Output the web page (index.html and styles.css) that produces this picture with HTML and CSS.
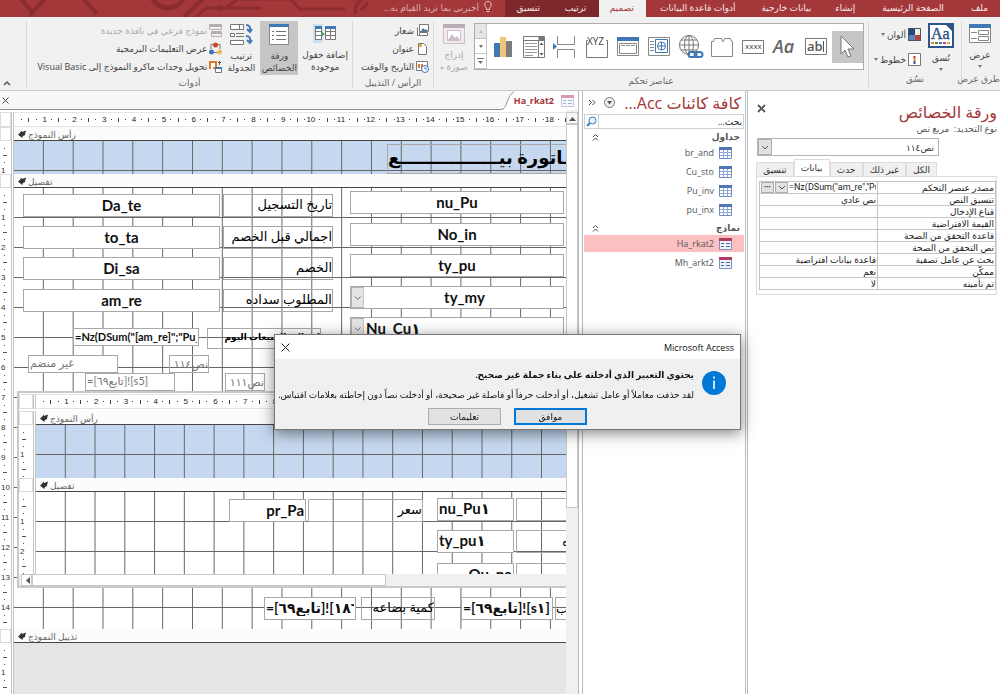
FILE: index.html
```html
<!DOCTYPE html>
<html lang="ar" dir="rtl">
<head>
  <meta charset="UTF-8" />
  <title>Microsoft Access</title>
  <link rel="stylesheet" href="styles.css">
</head>
<body>

  <!-- Title bar tabs -->
  <nav class="tabbar">
    <svg class="circuit" viewBox="0 0 370 17" aria-hidden="true">
      <g fill="none" stroke="#8b2c2f" stroke-width="4">
        <path d="M20 -2L34 14M46 -2L30 15M83 -2L97 14M184 17L204 -2"/>
        <path d="M151 -6A17 17 0 0 0 184 -4" stroke-width="5"/>
        <path d="M196 17L206 8H262M238 -1H290L300 9H345M225 8L238 -1" stroke-width="3"/>
        <path d="M372 -2A13 13 0 0 0 356 14" stroke-width="3"/>
      </g>
      <circle cx="221" cy="8" r="3" fill="#8b2c2f"/>
      <path d="M361 10L368 3" stroke="#8b2c2f" stroke-width="3"/>
    </svg>
    <a class="tab" href="#">ملف</a>
    <a class="tab tab-home" href="#">الصفحة الرئيسية</a>
    <a class="tab" href="#">إنشاء</a>
    <a class="tab" href="#">بيانات خارجية</a>
    <a class="tab tab-db" href="#">أدوات قاعدة البيانات</a>
    <a class="tab tab-ctx active" href="#">تصميم</a>
    <a class="tab tab-ctx" href="#">ترتيب</a>
    <a class="tab tab-ctx" href="#">تنسيق</a>
    <a class="tell-me" href="#">
      <svg width="10" height="13" viewBox="0 0 10 13" fill="none" stroke="#e6c3c4"><path d="M3.500 9.500V8C1 6 1 1.500 5 1.500S9 6 6.500 8v1.500zM3.500 11.500h3"/></svg>
      أخبرني بما تريد القيام به...
    </a>
  </nav>

  <!-- Ribbon -->
  <header class="ribbon">
    <section class="group group-views">
      <div class="group-body">
        <button class="big">
          <svg width="24" height="22" viewBox="0 0 24 22"><path fill="#fff" stroke="#888" d="M1.500 1.500h21v18h-21z"/><path fill="#3f78b4" d="M1 1h22v4H1z"/><path stroke="#888" fill="none" d="M3 9.500h6M3 15.500h6M10.500 7.500h10v4h-10zM10.500 13.500h10v4h-10z"/></svg>
          <span>عرض</span><i class="caret"></i>
        </button>
      </div>
      <h2>طرق عرض</h2>
    </section>

    <section class="group group-theme">
      <div class="group-body">
        <button class="big">
          <svg width="26" height="25" viewBox="0 0 26 25"><path fill="#fff" stroke="#2f5487" stroke-width="2" d="M1 1h24v23H1z"/><path fill="#2f5487" d="M17 1h8v8z"/><text x="3" y="16" font-family="Liberation Serif" font-size="16" fill="#2f5487" stroke="#2f5487" stroke-width=".4" direction="ltr">Aa</text><path stroke-width="2" d="M3 20h3" stroke="#e0873a"/><path stroke-width="2" d="M7 20h3" stroke="#4c8a3c"/><path stroke-width="2" d="M11 20h3" stroke="#3f78b4"/><path stroke-width="2" d="M15 20h3" stroke="#b94f8c"/><path stroke-width="2" d="M19 20h3" stroke="#d9a441"/></svg>
          <span>نُسق</span><i class="caret"></i>
        </button>
        <div class="stack stack-wide">
          <button class="small">
            <svg width="13" height="13" viewBox="0 0 13 13"><path fill="#24477c" d="M0 0h7v7H0z"/><path fill="#f0eee0" d="M7 0h6v7H7z"/><path fill="#5684bd" d="M0 7h7v6H0z"/><path fill="#b5423c" d="M7 7h6v6H7z"/><path fill="none" stroke="#44546a" d="M.5.5h12v12H.5z"/></svg>
            ألوان <i class="caret"></i>
          </button>
          <button class="small">
            <svg width="13" height="13" viewBox="0 0 13 13"><path fill="#fff" stroke="#777" d="M.5.5h12v12H.5z"/><path stroke="#c0392b" stroke-width="2" d="M6.500 3v2"/><path stroke="#e0873a" stroke-width="2" d="M6.500 5v3"/><path stroke="#2f5487" stroke-width="2" d="M6.500 8v3"/></svg>
            خطوط <i class="caret"></i>
          </button>
        </div>
      </div>
      <h2>نسُق</h2>
    </section>

    <section class="group group-controls">
      <div class="group-body">
        <div class="gallery">
          <button class="tool selected" aria-label="تحديد"><svg width="18" height="26" viewBox="0 0 18 26"><path fill="#fff" stroke="#777" d="M3 2v18l4-4 3 7 3-1-3-7h6z"/></svg></button>
          <button class="tool" aria-label="مربع نص"><svg width="24" height="20" viewBox="0 0 24 20"><path fill="#fff" stroke="#777" d="M1.500 1.500h21v16h-21z"/><text x="3" y="14" font-family="Open Sans" font-weight="600" font-size="13" fill="#555" direction="ltr">ab</text><path stroke="#555" d="M19.500 4v11"/></svg></button>
          <button class="tool" aria-label="تسمية"><svg width="28" height="20" viewBox="0 0 28 20"><text x="2" y="16" font-family="Open Sans" font-style="italic" font-weight="600" font-size="18" fill="#666" direction="ltr">Aa</text></svg></button>
          <button class="tool" aria-label="زر"><svg width="24" height="20" viewBox="0 0 24 20"><path fill="#fff" stroke="#777" d="M1.500 3.500h21v13h-21z"/><text x="4" y="12" font-family="Open Sans" font-size="8" fill="#444" direction="ltr">xxxx</text></svg></button>
          <button class="tool" aria-label="علامة تبويب"><svg width="24" height="22" viewBox="0 0 24 22"><path fill="#fff" stroke="#888" d="M1.500 20.500v-15h2l1-3h7l1 3h1l1-3h6l1 3h1v15z"/></svg></button>
          <button class="tool" aria-label="ارتباط"><svg width="26" height="26" viewBox="0 0 26 26" fill="none" stroke="#777"><circle cx="11" cy="11" r="9.500"/><ellipse cx="11" cy="11" rx="4.500" ry="9.500"/><path d="M1.500 11h19M11 1.500v19M3 6h16M3 16h16"/><path stroke="#f8f8f8" stroke-width="6" d="M12 20h12"/><rect x="10.500" y="18" width="8" height="5" rx="2.500" stroke="#3f78b4" stroke-width="2"/><rect x="16.500" y="18" width="8" height="5" rx="2.500" stroke="#3f78b4" stroke-width="2"/></svg></button>
          <button class="tool" aria-label="مستعرض ويب"><svg width="24" height="22" viewBox="0 0 24 22" fill="none" stroke="#888"><path d="M1.500 1.500h21v18h-21zM3 5.500h4M3 8.500h4M3 11.500h4M3 14.500h4"/><path fill="#fff" stroke="#3f78b4" d="M8.500 3.500h12v13h-12z"/><circle cx="14.500" cy="10" r="4" stroke="#3f78b4"/><path stroke="#3f78b4" d="M10.500 10h8M14.500 6v8"/></svg></button>
          <button class="tool" aria-label="عنصر تنقل"><svg width="24" height="22" viewBox="0 0 24 22" fill="none" stroke="#888"><path fill="#fff" d="M1.500 1.500h21v18h-21z"/><path fill="#3f78b4" stroke="none" d="M1 1h22v4H1z"/><path d="M3.500 7.500h17v10h-17zM5 9.500h4M10 9.500h4M15 9.500h4"/></svg></button>
          <button class="tool" aria-label="مجموعة خيارات"><svg width="24" height="24" viewBox="0 0 24 24"><path fill="none" stroke="#777" d="M3 5.500H1.500v17h21v-17H21"/><text x="2" y="10" font-family="Open Sans" font-size="10" fill="#444" direction="ltr">XYZ</text></svg></button>
          <button class="tool" aria-label="فاصل صفحات"><svg width="24" height="24" viewBox="0 0 24 24" fill="none" stroke="#888"><path d="M4.500 1v8.500h17V1M4.500 23v-8.500h17V23"/><path fill="#3f78b4" stroke="none" d="M0 8v7l4-3.500z"/></svg></button>
          <button class="tool" aria-label="مربع تحرير وسرد"><svg width="24" height="24" viewBox="0 0 24 24" fill="none" stroke="#777"><path fill="#fff" d="M1.500 1.500h21v21h-21zM1.500 5.500h21M16.500 5.500v17"/><path fill="#777" d="M17 2h5v3h-5z"/><path stroke="#999" d="M3 8.500h12M3 11.500h12M3 14.500h12M3 17.500h12M3 20.500h8"/><path fill="#555" stroke="none" d="M17.500 10h4l-2-2.500zM17.500 18h4l-2 2.500z"/></svg></button>
          <button class="tool" aria-label="مخطط"><svg width="20" height="24" viewBox="0 0 20 24"><path fill="#3f78b4" d="M1 8h6v14H1z"/><path fill="#edc576" d="M7 2h6v20H7z"/><path fill="#7b7b7b" d="M13 6h6v16h-6z"/></svg></button>
          <div class="gallery-scroll">
            <button class="off" aria-label="أعلى"><i class="caret up"></i></button>
            <button aria-label="أسفل"><i class="caret"></i></button>
            <button aria-label="المزيد"><svg width="7" height="7" viewBox="0 0 7 7"><path fill="#777" d="M0 0h7v1H0zM1 3h5L3.500 6z"/></svg></button>
          </div>
        </div>
        <button class="big disabled" disabled>
          <svg width="24" height="22" viewBox="0 0 24 22"><path fill="#f2eaf0" stroke="#c9bfc6" d="M1.500 1.500h21v19h-21z"/><path fill="#b9adb6" d="M1 1h22v4H1z"/><path fill="#fff" stroke="#cdbfca" d="M5.500 7.500h13v10h-13z"/><path fill="#cdbfca" d="M6 17l4-6 3 4 2-2 3 4z"/></svg>
          <span>إدراج<br>صورة <i class="caret"></i></span>
        </button>
      </div>
      <h2>عناصر تحكم</h2>
    </section>

    <section class="group group-head">
      <div class="group-body">
        <div class="stack">
          <button class="small"><svg width="13" height="13" viewBox="0 0 13 13" fill="#fff" stroke="#777"><path d="M3.500.5h9v7h-9zM1.500 3.500v8h7"/><path fill="#3f78b4" stroke="none" d="M5 7l2-3 2 2 1-1 2 2z"/><path d="M3.500 8.500h8v3h-8z"/></svg>شعار</button>
          <button class="small"><svg width="13" height="13" viewBox="0 0 13 13"><path fill="#fff" stroke="#777" d="M2.500 1.500h5l3 3v8h-8z"/><path fill="#e9a64a" d="M3 2h3v3H3z"/></svg>عنوان</button>
          <button class="small"><svg width="13" height="13" viewBox="0 0 13 13"><path fill="#fff" stroke="#777" d="M.5 1.500h11v9H.5z"/><path stroke="#d3762f" stroke-width="2" fill="none" d="M3 4v4M6 4v4"/><circle cx="9" cy="9" r="3.500" fill="#fff" stroke="#3f78b4"/><path stroke="#3f78b4" fill="none" d="M9 7v2h2"/></svg>التاريخ والوقت</button>
        </div>
      </div>
      <h2>الرأس / التذييل</h2>
    </section>

    <section class="group group-tools">
      <div class="group-body">
        <button class="big">
          <svg width="24" height="22" viewBox="0 0 24 22"><path fill="#cfe0f3" d="M0 1h10v19H0z"/><path fill="#fff" stroke="#777" d="M2.500 3.500h6v13h-6zM2.500 8.500h6M2.500 12.500h6M12.500 3.500h10v13h-10zM12.500 8.500h10M12.500 12.500h10M17.500 5v11"/><path fill="#3f78b4" d="M2 3h7v3H2zM12 3h11v3H12z"/><path fill="#4f9a6a" d="M8 8v6l4-3z"/></svg>
          <span>إضافة حقول<br>موجودة</span>
        </button>
        <button class="big selected">
          <svg width="22" height="23" viewBox="0 0 22 23"><path fill="#fff" stroke="#888" d="M1.500 1.500h19v20h-19z"/><path fill="#3f78b4" d="M1 1h20v3H1z"/><path stroke="#777" d="M4 8.500h2M4 12.500h2M4 16.500h2M8 8.500h10M8 12.500h10M8 16.500h10"/></svg>
          <span>ورقة<br>الخصائص</span>
        </button>
        <button class="big narrow">
          <svg width="24" height="23" viewBox="0 0 24 23" fill="none" stroke="#777"><path fill="#fff" d="M1.500 1.500h13v5h-13zM1.500 10.500h4v3h-4zM1.500 17.500h13v4h-13z"/><path d="M10.500 2v4M7 10.500h8M7 13.500h8"/><path stroke="#3f78b4" stroke-width="2" d="M17 2q5 0 4 6M18 6l3 3 2-3M17 13q5 0 4 5M18 17l3 3 2-3"/></svg>
          <span>ترتيب<br>الجدولة</span>
        </button>
        <div class="stack">
          <button class="small disabled" disabled><svg width="13" height="13" viewBox="0 0 13 13"><path fill="#f4eef2" stroke="#b5adb2" d="M.5.5h12v5H.5zM2.500 7.500h10v5h-10z"/><path stroke="#b5adb2" stroke-width="2" d="M0 2h13M2 9h11"/></svg>نموذج فرعي في نافذة جديدة</button>
          <button class="small"><svg width="13" height="13" viewBox="0 0 13 13"><path fill="none" stroke="#777" d="M2 7V2.500h9V7M4 10.500h5"/><circle cx="6.500" cy="3" r="2.500" fill="#d24726"/><circle cx="2.500" cy="10" r="2.500" fill="#3f78b4"/><circle cx="10.500" cy="10" r="2.500" fill="#edb765"/></svg>عرض التعليمات البرمجية</button>
          <button class="small"><svg width="13" height="13" viewBox="0 0 13 13"><path fill="#fff" stroke="#dc7a26" stroke-width="2" d="M1 9V2h6v6H4"/><path fill="none" stroke="#555" d="M9 2.500h3M10.500 1v4"/><path fill="#fff" stroke="#777" d="M6.500 7.500h6v5h-6z"/><path fill="#3f78b4" d="M6 7h7v2H6z"/></svg>تحويل وحدات ماكرو النموذج إلى Visual Basic</button>
        </div>
      </div>
      <h2>أدوات</h2>
    </section>
    <button class="collapse" aria-label="طي الشريط"><svg width="8" height="6" viewBox="0 0 8 6"><path fill="none" stroke="#555" stroke-width="1.500" d="M1 5l3-3 3 3"/></svg></button>
  </header>

  <main class="workspace">

    <!-- Property sheet -->
    <aside class="props">
      <div class="props-head">
        <h1>ورقة الخصائص</h1>
        <button class="close" aria-label="إغلاق"><svg width="9" height="9" viewBox="0 0 9 9"><path stroke="#555" stroke-width="1.800" d="M1 1l7 7M8 1L1 8"/></svg></button>
      </div>
      <p class="props-type">نوع التحديد:&nbsp; مربع نص</p>
      <div class="combo props-combo">
        <select aria-label="التحديد"><option>نص١١٤</option></select>
        <svg viewBox="0 0 14 16"><path fill="#e1e1e1" stroke="#adadad" d="M.5.5h13v15H.5z"/><path fill="none" stroke="#555" d="M4 7l3 3 3-3"/></svg>
      </div>
      <div class="props-tabs">
        <button>الكل</button>
        <button>غير ذلك</button>
        <button>حدث</button>
        <button class="active">بيانات</button>
        <button>تنسيق</button>
      </div>
      <div class="props-panel">
        <table>
          <tr>
            <th>مصدر عنصر التحكم</th>
            <td class="source">
              <div>
                <input type="text" dir="ltr" aria-label="مصدر عنصر التحكم" value='=Nz(DSum("am_re","Pu_inv"'>
                <button aria-label="قائمة"><svg width="8" height="6" viewBox="0 0 8 6"><path fill="none" stroke="#555" d="M1 1l3 3 3-3"/></svg></button>
                <button aria-label="منشئ التعبير">•••</button>
              </div>
            </td>
          </tr>
          <tr><th>تنسيق النص</th><td>نص عادي</td></tr>
          <tr><th>قناع الإدخال</th><td></td></tr>
          <tr><th>القيمة الافتراضية</th><td></td></tr>
          <tr><th>قاعدة التحقق من الصحة</th><td></td></tr>
          <tr><th>نص التحقق من الصحة</th><td></td></tr>
          <tr><th>بحث عن عامل تصفية</th><td>قاعدة بيانات افتراضية</td></tr>
          <tr><th>ممكّن</th><td>نعم</td></tr>
          <tr><th>تم تأمينه</th><td>لا</td></tr>
        </table>
      </div>
    </aside>

    <!-- Navigation pane -->
    <aside class="objects">
      <div class="objects-head">
        <h1>كافة كائنات Acc...</h1>
        <button aria-label="القائمة"><svg width="11" height="11" viewBox="0 0 11 11"><circle cx="5.500" cy="5.500" r="5" fill="#eee" stroke="#777"/><path fill="#555" d="M3 4h5L5.500 7.500z"/></svg></button>
        <button aria-label="طي الجزء"><svg width="8" height="7" viewBox="0 0 8 7"><path fill="none" stroke="#444" d="M1 1l2.500 2.500L1 6M4.500 1L7 3.500 4.500 6"/></svg></button>
      </div>
      <div class="search">
        <input type="text" placeholder="بحث..." aria-label="بحث">
        <button aria-label="ابدأ البحث"><svg width="11" height="11" viewBox="0 0 11 11"><circle cx="6.500" cy="4.500" r="3.500" fill="#e8f2fb" stroke="#3f78b4"/><path stroke="#3f78b4" stroke-width="2" d="M4 7l-3 3"/></svg></button>
      </div>
      <h3>جداول <svg width="7" height="8" viewBox="0 0 7 8"><path fill="none" stroke="#444" d="M1 4l2.500-2.500L6 4M1 7.500L3.500 5 6 7.500"/></svg></h3>
      <ul>
        <li><a href="#"><svg class="ic"><use href="#ic-table"/></svg>br_and</a></li>
        <li><a href="#"><svg class="ic"><use href="#ic-table"/></svg>Cu_sto</a></li>
        <li><a href="#"><svg class="ic"><use href="#ic-table"/></svg>Pu_inv</a></li>
        <li><a href="#"><svg class="ic"><use href="#ic-table"/></svg>pu_inx</a></li>
      </ul>
      <h3>نماذج <svg width="7" height="8" viewBox="0 0 7 8"><path fill="none" stroke="#444" d="M1 4l2.500-2.500L6 4M1 7.500L3.500 5 6 7.500"/></svg></h3>
      <ul>
        <li class="current"><a href="#"><svg class="ic"><use href="#ic-form"/></svg>Ha_rkat2</a></li>
        <li><a href="#"><svg class="ic"><use href="#ic-form"/></svg>Mh_arkt2</a></li>
      </ul>
    </aside>

    <!-- Form in design view -->
    <section class="doc" dir="ltr">
      <div class="doc-tabs">
        <button class="close" aria-label="إغلاق"><svg width="7" height="7" viewBox="0 0 7 7"><path stroke="#444" d="M.5.5l6 6M6.500.5l-6 6"/></svg></button>
        <svg class="slope" viewBox="0 0 12 19"><path fill="#fff" d="M0 19Q3 18 5 11T12 0V19z"/><path fill="none" stroke="#8f959c" d="M0 18Q3 18 5 11T12 .5"/></svg>
        <a class="doc-tab" href="#">Ha_rkat2 <svg class="ic faded"><use href="#ic-form"/></svg></a>
      </div>

      <div class="doc-body">
        <div class="designer">
          <div class="row ruler-row">
            <div class="vruler corner"></div>
            <div class="hruler main-scale">
              <span>1</span><span>2</span><span>3</span><span>4</span><span>5</span><span>6</span><span>7</span><span>8</span><span>9</span><span>10</span><span>11</span><span>12</span><span>13</span><span>14</span><span>15</span><span>16</span><span>17</span><span>18</span><span></span>
            </div>
          </div>

          <div class="row bar"><div class="vruler box"></div><h4>رأس النموذج</h4></div>
          <div class="row">
            <div class="vruler"><span>1</span></div>
            <div class="grid header-grid main-grid">
              <div class="label form-title" dir="rtl">فـــــــــــــــاتورة بيــــــــــــــــع</div>
            </div>
          </div>

          <div class="row bar"><div class="vruler box"></div><h4>تفصيل</h4></div>
          <div class="row">
            <div class="vruler">
              <span>1</span><span>2</span><span>3</span><span>4</span><span>5</span><span>6</span><span>7</span><span>8</span><span>9</span><span>10</span><span>11</span><span>12</span><span>13</span><span>14</span><span></span>
            </div>
            <div class="grid detail-grid main-grid">
              <input class="field col-a line-1" id="da_te" value="Da_te">
              <input class="field col-a line-2" id="to_ta" value="to_ta">
              <input class="field col-a line-3" id="di_sa" value="Di_sa">
              <input class="field col-a line-4" id="am_re" value="am_re">

              <label class="label col-b line-1" for="da_te" dir="rtl">تاريخ التسجيل</label>
              <label class="label col-b line-2" for="to_ta" dir="rtl">اجمالي قبل الخصم</label>
              <label class="label col-b line-3" for="di_sa" dir="rtl">الخصم</label>
              <label class="label col-b line-4" for="am_re" dir="rtl">المطلوب سداده</label>

              <input class="field col-c line-1" aria-label="nu_Pu" value="nu_Pu">
              <input class="field col-c line-2" aria-label="No_in" value="No_in">
              <input class="field col-c line-3" aria-label="ty_pu" value="ty_pu">
              <div class="field combo col-c line-4">
                <select aria-label="ty_my"><option>ty_my</option></select>
                <svg viewBox="0 0 14 22"><path fill="#e4e4e4" stroke="#adadad" d="M.5.5h13v21H.5z"/><path fill="none" stroke="#666" d="M4 10l3 3 3-3"/></svg>
              </div>
              <div class="field combo col-c line-5">
                <select class="start" aria-label="Nu_Cu"><option>Nu_Cu١</option></select>
                <svg viewBox="0 0 14 22"><path fill="#e4e4e4" stroke="#adadad" d="M.5.5h13v21H.5z"/><path fill="none" stroke="#666" d="M4 10l3 3 3-3"/></svg>
              </div>

              <input class="field sum-field" id="day_sum" value='=Nz(DSum("[am_re]";"Pu_inv"'>
              <label class="label sum-label" for="day_sum" dir="rtl">اجمالى المبيعات اليوم</label>
              <input class="field minor unbound" aria-label="غير منضم" value="غير منضم">
              <div class="label minor text-114">نص١١٤</div>
              <input class="field minor sub-ref" aria-label="s5" value="=[تابع٦٩]![s5]">
              <div class="label minor text-111">نص١١١</div>

              <!-- Subform -->
              <div class="subform">
                <div class="row sub-ruler-row">
                  <div class="vruler corner"></div>
                  <div class="hruler sub-scale">
                    <span>1</span><span>2</span><span>3</span><span>4</span><span>5</span><span>6</span><span>7</span><span>8</span><span>9</span><span>10</span><span>11</span><span>12</span><span>13</span><span>14</span><span>15</span><span>16</span><span>17</span>
                  </div>
                </div>
                <div class="row bar"><div class="vruler box"></div><h4>رأس النموذج</h4></div>
                <div class="row">
                  <div class="vruler"><span>1</span><span></span></div>
                  <div class="grid header-grid sub-grid sub-header"></div>
                </div>
                <div class="row bar"><div class="vruler box"></div><h4>تفصيل</h4></div>
                <div class="row">
                  <div class="vruler"><span>1</span><span>2</span><span></span></div>
                  <div class="grid sub-grid sub-detail">
                    <input class="field sub-price end" id="pr_pa" value="pr_Pa">
                    <label class="label sub-price-label" for="pr_pa" dir="rtl">سعر</label>
                    <input class="field sub-code start sub-line-1" aria-label="nu_Pu1" value="nu_Pu١">
                    <input class="field sub-code start sub-line-2" aria-label="ty_pu1" value="ty_pu١">
                    <input class="field sub-code end sub-line-3" aria-label="Qu_pa" value="Qu_pa">
                    <div class="label sub-cut sub-line-1"></div>
                    <div class="label sub-cut sub-line-2" dir="rtl">ه</div>
                    <div class="label sub-cut sub-line-3"></div>
                  </div>
                </div>
                <div class="hscroll">
                  <button aria-label="يسار"><svg width="5" height="7" viewBox="0 0 5 7"><path fill="#555" d="M5 0v7L1 3.500z"/></svg></button>
                  <div class="hthumb"></div>
                </div>
              </div>

              <input class="field foot-a start" aria-label="18" value="=[تابع٦٩&lrm;]![&lrm;١٨٦]">
              <label class="label foot-b" for="qty" dir="rtl">كمية بضاعه</label>
              <input class="field foot-c start" id="qty" value="=[تابع٦٩]![s١]">
              <div class="label foot-d">ب</div>
            </div>
          </div>

          <div class="row bar"><div class="vruler box"></div><h4>تذييل النموذج</h4></div>
          <div class="row rest">
            <div class="vruler"><span>1</span><span></span></div>
            <div class="outside"></div>
          </div>
        </div>

        <div class="vscroll">
          <button aria-label="أعلى"><svg width="7" height="5" viewBox="0 0 7 5"><path fill="#555" d="M0 5h7L3.500 1z"/></svg></button>
          <div class="vthumb"></div>
        </div>
      </div>
    </section>
  </main>

  <!-- Error message -->
  <div class="dialog" role="alertdialog" aria-labelledby="dialogTitle">
    <div class="dialog-title">
      <span id="dialogTitle">Microsoft Access</span>
      <button class="close" aria-label="إغلاق"><svg width="9" height="9" viewBox="0 0 9 9"><path stroke="#222" d="M.5.5l8 8M8.500.5l-8 8"/></svg></button>
    </div>
    <div class="dialog-body">
      <svg class="info" viewBox="0 0 24 24"><circle cx="12" cy="12" r="12" fill="#0078d7"/><path stroke="#fff" stroke-width="1.600" d="M12 9.500v8.500M12 5.500v2"/></svg>
      <div class="message">
        <p class="strong">يحتوي التعبير الذي أدخلته على بناء جملة غير صحيح.</p>
        <p>لقد حذفت معاملاً أو عامل تشغيل، أو أدخلت حرفاً أو فاصلة غير صحيحة، أو أدخلت نصاً دون إحاطته بعلامات اقتباس.</p>
      </div>
    </div>
    <div class="dialog-buttons">
      <button class="default">موافق</button>
      <button>تعليمات</button>
    </div>
  </div>

  <svg class="defs" aria-hidden="true">
    <symbol id="ic-table" viewBox="0 0 13 12"><path fill="#fff" stroke="#6f8fc0" d="M.5.5h12v11H.5z"/><path fill="#4f77b5" d="M0 0h13v3H0z"/><path fill="none" stroke="#8ea9d2" d="M1 5.500h11M1 8.500h11M4.500 3v8M8.500 3v8"/></symbol>
    <symbol id="ic-form" viewBox="0 0 13 12"><path fill="#eef2fa" stroke="#8093bd" d="M.5.5h12v11H.5z"/><path fill="#b33a62" d="M0 0h13v3H0z"/><path fill="none" stroke="#4f68a5" d="M2 5.500h3M2 8.500h3M7 5.500h4M7 8.500h4"/></symbol>
  </svg>

</body>
</html>
```
FILE: styles.css
```css
* {
  box-sizing: border-box;
}

body {
  margin: 0;
  height: 100vh;
  display: flex;
  flex-direction: column;
  overflow: hidden;
  font-family: "Open Sans", "DejaVu Sans", sans-serif;
  font-size: 9px;
  color: #444;
  background: #fff;
}

h1, h2, h3, h4, p, ul {
  margin: 0;
  padding: 0;
  font-weight: normal;
  list-style: none;
}

button {
  padding: 0;
  border: 0;
  background: none;
  font: inherit;
  color: inherit;
}

input, select {
  min-width: 0;
  margin: 0;
  padding: 0;
  border: 0;
  font: inherit;
  color: inherit;
  background: none;
  border-radius: 0;
  appearance: none;
}

a {
  color: inherit;
  text-decoration: none;
}

svg {
  flex: none;
  display: block;
}

.defs {
  position: absolute;
  width: 0;
  height: 0;
}

.ic {
  width: 13px;
  height: 12px;
}

.faded {
  opacity: 0.5;
}

/* Title bar */
.tabbar {
  position: relative;
  display: flex;
  height: 17px;
  background: #a4373a;
  color: #f6e9e9;
  overflow: hidden;
}

.circuit {
  position: absolute;
  left: 0;
  top: 0;
  width: 370px;
  height: 17px;
}

.tab {
  padding: 0 12px;
  line-height: 15px;
  white-space: nowrap;
}

.tab-home {
  padding: 0 15px;
}

.tab-db {
  padding: 0 14px;
}

.tab-ctx {
  width: 47px;
  text-align: center;
  background: #7f282b;
}

.tab-ctx.active {
  background: #f1f1f1;
  color: #a4373a;
}

.tell-me {
  display: flex;
  gap: 4px;
  padding: 0 12px;
  line-height: 16px;
  color: #dcaeb0;
  white-space: nowrap;
}

/* Ribbon */
.ribbon {
  display: flex;
  height: 74px;
  padding-top: 4px;
  background: #f1f1f1;
  border-bottom: 1px solid #c8c8c8;
  flex: none;
}

.group {
  display: flex;
  flex-direction: column;
  height: 66px;
  border-left: 1px solid #d8d8d8;
}

.group-body {
  display: flex;
  height: 54px;
  gap: 4px;
  padding: 0 4px;
}

.group h2 {
  font-size: 9px;
  line-height: 16px;
  text-align: center;
  white-space: nowrap;
  color: #666;
}

.group-views {
  width: 39px;
}

.group-theme {
  width: 93px;
}

.group-controls {
  flex: 1;
}

.group-head {
  width: 81px;
}

.group-tools {
  width: 326px;
}

.big {
  display: flex;
  flex-direction: column;
  align-items: center;
  gap: 4px;
  min-width: 32px;
  padding-top: 2px;
  line-height: 12px;
  white-space: nowrap;
}

.big.selected {
  width: 38px;
  background: #c6c6c6;
}

.group-tools .big {
  min-width: 38px;
}

.group-tools .narrow {
  min-width: 30px;
}

.disabled {
  color: #aaa;
}

.caret {
  display: inline-block;
  border: 2px solid transparent;
  border-top: 3px solid #777;
  border-bottom: 0;
}

.caret.up {
  border-top: 0;
  border-bottom: 3px solid #bbb;
}

.disabled .caret {
  border-top-color: #bbb;
}

.stack {
  display: flex;
  flex-direction: column;
}

.small {
  display: flex;
  align-items: center;
  gap: 2px;
  height: 18px;
  white-space: nowrap;
}

.stack-wide {
  gap: 7px;
  padding-top: 4px;
}

.gallery {
  flex: 1;
  display: flex;
  height: 47px;
  margin-top: 2px;
  background: #fff;
  border: 1px solid #ababab;
}

.tool {
  flex: 1;
  display: flex;
  align-items: center;
  justify-content: center;
  min-width: 0;
}

.tool.selected {
  height: 32px;
  margin-top: 7px;
  background: #c6c6c6;
}

.gallery-scroll {
  width: 12px;
  display: flex;
  flex-direction: column;
  border-right: 1px solid #c6c6c6;
}

.gallery-scroll button {
  flex: 1;
  display: flex;
  align-items: center;
  justify-content: center;
  border-bottom: 1px solid #c6c6c6;
}

.gallery-scroll .off {
  background: #e6e6e6;
}

.collapse {
  align-self: flex-end;
  width: 26px;
  padding: 0 15px 4px 0;
}

/* Workspace */
.workspace {
  flex: 1;
  display: flex;
  min-height: 0;
}

/* Property sheet */
.props {
  width: 253px;
  padding: 10px 3px 0 8px;
  border-left: 1px solid #b4bac2;
  color: #333;
}

.props-head {
  display: flex;
  justify-content: space-between;
  align-items: flex-start;
}

.props-head h1,
.objects-head h1 {
  font-size: 16px;
  line-height: 22px;
  color: #a4373a;
  white-space: nowrap;
}

.props-head .close {
  padding: 3px 1px;
}

.props-type {
  line-height: 12px;
  color: #555;
}

.combo {
  position: relative;
  display: flex;
}

.combo select {
  width: 100%;
}

.combo svg {
  position: absolute;
  left: 0;
  top: 0;
  height: 100%;
  pointer-events: none;
}

.props-combo {
  width: 182px;
  height: 18px;
  margin: 3px 58px 3px 0;
  border: 1px solid #b4b4b4;
  background: #fff;
}

.props-combo select {
  padding: 0 4px;
}

.props-tabs {
  display: flex;
  align-items: flex-end;
  height: 17px;
  margin: 0 60px 0 0;
}

.props-tabs button {
  flex: 1 1 auto;
  height: 14px;
  line-height: 14px;
  border: 1px solid #dcdcdc;
  border-bottom: 0;
  background: #f0f0f0;
}

.props-tabs .active {
  height: 17px;
  background: #fff;
}

.props-panel {
  padding: 4px 0 4px 2px;
  border: 1px solid #dcdcdc;
}

.props table {
  width: 100%;
  border-collapse: collapse;
  table-layout: fixed;
}

.props th,
.props td {
  height: 12px;
  padding: 0 1px;
  border: 1px solid #c4c4c4;
  font-size: 9px;
  font-weight: normal;
  line-height: 11px;
  text-align: right;
  white-space: nowrap;
  overflow: hidden;
  color: #222;
}

.source div {
  display: flex;
  height: 11px;
}

.source input {
  flex: 1;
  font-family: Roboto, sans-serif;
}

.source button {
  display: flex;
  align-items: center;
  justify-content: center;
  width: 13px;
  margin-right: 1px;
  border: 1px solid #adadad;
  background: #e1e1e1;
  font-size: 6px;
}

/* Navigation pane */
.objects {
  width: 164px;
  margin: 0 1px 0 3px;
  padding: 0 1px;
  border: 1px solid #b4bac2;
  border-width: 0 1px;
  color: #555;
}

.objects-head {
  display: flex;
  align-items: center;
  gap: 8px;
  height: 23px;
  padding: 0 3px 0 4px;
}

.objects-head h1 {
  flex: 1;
}

.search {
  display: flex;
  height: 15px;
  border: 1px solid #d0d0d0;
}

.search input {
  flex: 1;
  padding: 0 1px;
}

.search input::placeholder {
  color: #222;
}

.search button {
  padding: 1px;
  border-right: 1px solid #d0d0d0;
}

.objects h3 {
  display: flex;
  justify-content: space-between;
  align-items: center;
  height: 15px;
  padding: 0 4px 0 8px;
  font-size: 9px;
  font-weight: bold;
}

.objects li {
  height: 17px;
  margin-bottom: 2px;
}

.objects li a {
  display: flex;
  align-items: center;
  gap: 5px;
  height: 17px;
  padding-right: 12px;
}

.objects .current {
  background: #fcc0c2;
}

/* Document */
.doc {
  flex: 1;
  display: flex;
  flex-direction: column;
  min-width: 0;
  border-right: 1px solid #b4bac2;
}

.doc-tabs {
  display: flex;
  height: 19px;
  background: linear-gradient(#f7f7f7 18px, #8f959c 18px);
}

.doc-tabs .close {
  padding: 0 2px;
}

.slope {
  width: 12px;
  height: 19px;
  margin-left: auto;
}

.doc-tab {
  display: flex;
  align-items: center;
  gap: 7px;
  padding: 0 4px 0 0;
  background: #fff;
  font-size: 9px;
  font-weight: bold;
  color: #a4373a;
}

.doc-body {
  flex: 1;
  display: flex;
  min-height: 0;
}

.designer {
  flex: 1;
  display: flex;
  flex-direction: column;
  min-width: 0;
  overflow: hidden;
}

.row {
  display: flex;
  flex: none;
}

.row.rest {
  flex: 1;
  overflow: hidden;
}

.ruler-row {
  height: 17px;
  padding-top: 2px;
}

.bar {
  height: 14px;
}

.bar h4 {
  flex: 1;
  padding-left: 14px;
  background: #fcfcfc;
  border-bottom: 1px solid #444;
  font-size: 9px;
  line-height: 15px;
  color: #666;
}

.bar h4::before {
  content: "";
  float: left;
  width: 8px;
  height: 8px;
  margin: 3px 2px 0 -10px;
  background: #333;
  clip-path: polygon(0 60%, 50% 5%, 50% 25%, 100% 5%, 85% 65%, 60% 75%, 55% 100%);
}

/* Rulers: tick marks at the quarters, number at the end of each unit */
.vruler {
  contain: size;
  display: flex;
  flex-direction: column;
  flex: none;
  width: 14px;
  padding-top: 4px;
  overflow: hidden;
  border-right: 3px double #c4c4c4;
  font-family: "Liberation Sans", sans-serif;
  font-size: 8px;
  color: #333;
}

.vruler span {
  flex: none;
  display: flex;
  align-items: flex-end;
  height: 30px;
  padding-left: 1px;
  line-height: 8px;
  background:
    linear-gradient(#555, #555) 4px 3px / 1px 1px no-repeat,
    linear-gradient(#555, #555) 3px 10px / 4px 1px no-repeat,
    linear-gradient(#555, #555) 4px 17px / 1px 1px no-repeat;
}

.vruler.box,
.vruler.corner {
  box-shadow: inset 0 0 0 1px #dcdcdc;
}

.hruler {
  flex: 1;
  display: flex;
  overflow: hidden;
  border: 1px solid #e4e4e4;
  border-width: 1px 0;
  font-family: "Liberation Sans", sans-serif;
  font-size: 8px;
  color: #222;
}

.hruler span {
  flex: none;
  display: flex;
  justify-content: flex-end;
  line-height: 13px;
  background:
    linear-gradient(#444, #444) 25% 50% / 1px 1px no-repeat,
    linear-gradient(#444, #444) 50% 50% / 1px 4px no-repeat,
    linear-gradient(#444, #444) 75% 50% / 1px 1px no-repeat;
}

.main-scale span {
  width: calc(100% / 18.5);
}

.sub-scale span {
  width: calc(100% / 17.8);
}

.hruler span::after {
  content: "";
  margin-right: -3px;
}

/* Design surface */
.grid {
  position: relative;
  flex: 1;
  overflow: hidden;
  background-color: #fff;
  background-image:
    linear-gradient(to left, #666 1px, transparent 1px),
    linear-gradient(to top, #666 1px, transparent 1px);
}

.main-grid {
  background-size: calc(100% / 18.5) 30px;
}

.sub-grid {
  background-size: calc(100% / 17.8) 30px;
}

.header-grid {
  height: 33px;
  background-color: #c6d8f0;
}

.detail-grid {
  height: 441px;
}

.outside {
  flex: 1;
  background: #e5e5e5;
}

.field,
.label {
  position: absolute;
  height: 23px;
  border: 1px solid #a8a8a8;
  font-family: Lato, "DejaVu Sans", sans-serif;
  font-size: 15px;
  font-weight: bold;
  line-height: 21px;
  white-space: nowrap;
  overflow: hidden;
  color: #111;
}

.field {
  padding: 0 1px 2px;
  background: #fff;
  text-align: center;
}

.field.combo {
  padding: 0;
}

.field select {
  padding: 0 0 2px 15px;
  text-align: center;
}

.label {
  font-size: 13px;
  font-weight: normal;
  color: #000;
}

.field.start,
.field .start {
  text-align: left;
}

.field.end {
  text-align: right;
}

.col-a {
  left: 9px;
  width: 197px;
  margin-top: 3px;
}

.col-b {
  left: 209px;
  width: 110px;
  margin-top: 3px;
  line-height: 18px;
}

.col-c {
  left: 336px;
  width: 214px;
}

.line-1 { top: 3px; }
.line-2 { top: 35px; }
.line-3 { top: 66px; }
.line-4 { top: 98px; }
.line-5 { top: 129px; }

.form-title {
  left: 373px;
  top: 3px;
  width: 400px;
  height: 30px;
  font-size: 18px;
  font-weight: bold;
  line-height: 24px;
  text-align: left;
}

.sum-field {
  left: 59px;
  top: 140px;
  width: 126px;
  height: 18px;
  font-size: 11px;
  text-align: left;
}

.sum-label {
  left: 193px;
  top: 140px;
  width: 114px;
  height: 21px;
  font-size: 9px;
  font-weight: bold;
  line-height: 15px;
}

.minor {
  height: 18px;
  font-size: 11px;
  font-weight: normal;
  line-height: 15px;
  text-align: left;
  color: #777;
}

.unbound {
  left: 14px;
  top: 167px;
  width: 90px;
}

.text-114 {
  left: 155px;
  top: 167px;
  width: 40px;
  text-align: right;
}

.sub-ref {
  left: 71px;
  top: 185px;
  width: 90px;
}

.text-111 {
  left: 211px;
  top: 185px;
  width: 40px;
  text-align: right;
}

.foot-a {
  left: 250px;
  top: 409px;
  width: 92px;
}

.foot-b {
  left: 347px;
  top: 409px;
  width: 74px;
  line-height: 18px;
}

.foot-c {
  left: 447px;
  top: 409px;
  width: 92px;
}

.foot-d {
  left: 541px;
  top: 409px;
  width: 40px;
}

.foot-a,
.foot-c {
  font-size: 14px;
}

/* Subform */
.subform {
  position: absolute;
  left: 3px;
  right: 0;
  top: 203px;
  border: 2px solid #c8c8c8;
  border-right: 0;
  background: #fff;
}

.subform .vruler {
  width: 17px;
}

.sub-ruler-row {
  height: 18px;
  padding: 1px 0 2px;
}

.sub-header {
  height: 53px;
}

.sub-detail {
  height: 82px;
}

.sub-price {
  left: 193px;
  top: 7px;
  width: 77px;
}

.sub-price-label {
  left: 272px;
  top: 7px;
  width: 115px;
  line-height: 18px;
}

.sub-code {
  left: 401px;
  width: 77px;
}

.sub-cut {
  left: 480px;
  width: 54px;
}

.sub-line-1 { top: 6px; }
.sub-line-2 { top: 38px; }
.sub-line-3 { top: 71px; }

.hscroll {
  display: flex;
  height: 12px;
  background: #f0f0f0;
  padding-left: 2px;
}

.hscroll button {
  width: 11px;
  padding-left: 3px;
  border: 1px solid #c8c8c8;
  background: #fff;
}

.hthumb {
  width: 65%;
  border: 1px solid #c8c8c8;
  background: #fff;
}

.vscroll {
  display: flex;
  flex-direction: column;
  width: 12px;
  padding-top: 2px;
  background: #f0f0f0;
}

.vscroll button {
  height: 12px;
  padding-left: 2px;
  border: 1px solid #c8c8c8;
  background: #f8f8f8;
}

.vthumb {
  height: 66%;
  border: 1px solid #c8c8c8;
  background: #fff;
}

/* Message box */
.dialog {
  position: fixed;
  left: 274px;
  top: 334px;
  width: 467px;
  border: 1px solid #777;
  background: #f0f0f0;
  box-shadow: 0 3px 14px rgba(0, 0, 0, 0.5);
  color: #111;
}

.dialog-title {
  display: flex;
  justify-content: space-between;
  align-items: center;
  height: 24px;
  padding: 0 6px;
  background: #fff;
  font-size: 9px;
}

.dialog-body {
  display: flex;
  gap: 8px;
  padding: 9px 14px 0 0;
}

.info {
  width: 24px;
  height: 24px;
  margin-top: 3px;
}

.message p {
  font-family: Lato, "DejaVu Sans", sans-serif;
  font-size: 9px;
  line-height: 13px;
  margin-bottom: 7px;
  white-space: nowrap;
}

.message .strong {
  font-weight: bold;
}

.dialog-buttons {
  display: flex;
  justify-content: center;
  gap: 13px;
  padding-bottom: 4px;
}

.dialog-buttons button {
  width: 73px;
  height: 17px;
  border: 1px solid #adadad;
  background: #e1e1e1;
}

.dialog-buttons .default {
  border: 2px solid #0078d7;
}
```
